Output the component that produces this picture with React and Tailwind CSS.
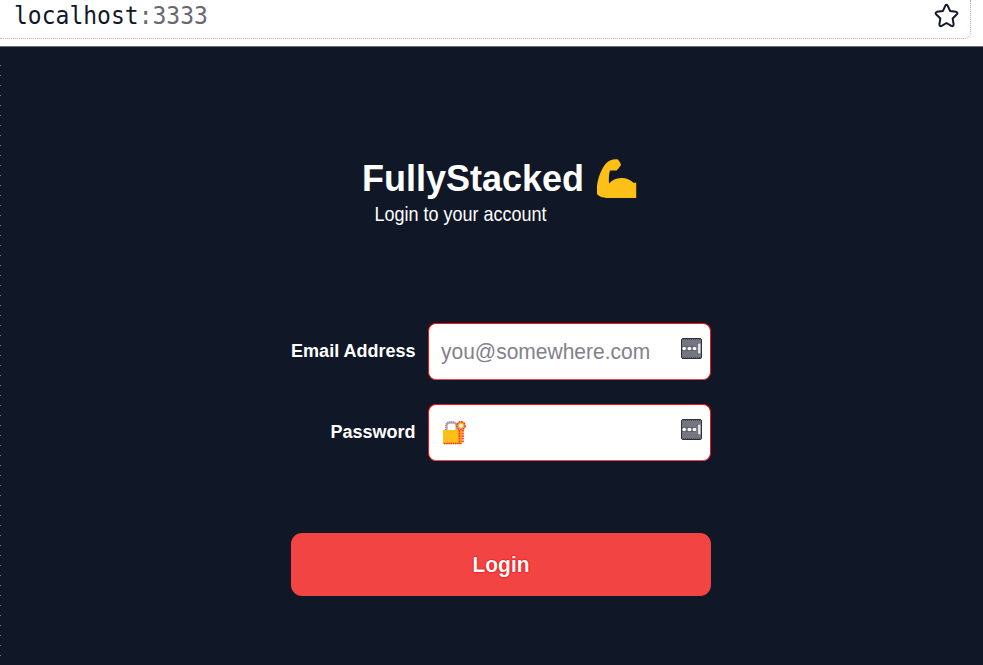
import React from "react";

const sans = "font-['Liberation_Sans',Arial,sans-serif]";

function Star() {
  return (
    <svg className="h-[25px] w-[25px]" viewBox="0 0 26 26" fill="none" stroke="#111827" strokeWidth="2.1" strokeLinejoin="round">
      <path d="M11.8 2.8Q13 .8 14.2 2.8L16.7 8.2L23 9.2Q25.2 10 23.8 11.7L19.4 16.2L20.4 22Q20.3 24.8 18 23.8L13 20.8L8 23.8Q5.7 24.8 5.6 22L6.6 16.2L2.2 11.7Q.8 10 3 9.2L9.3 8.2Z" />
    </svg>
  );
}

function FlexedArm() {
  return (
    <svg className="h-10 w-10" viewBox="0 0 40 40" fill="#fdc016">
      <path d="M0 37V27C1 18 5 8 10.5 3C13 .8 17 -.3 21 .4C22 1.8 23.7 4 24 6L21.5 9.5L19.5 11.5L13 11.6C11.8 15 11.7 20 12 24.5C15 21 19 19.4 24 19C29 18.8 33 20.5 36.5 23.7H39.2V39H11C7 39 3 38.4 0 35Z" />
    </svg>
  );
}

function LockWithKey() {
  return (
    <svg className="h-6 w-6" viewBox="0 0 24 24">
      <path d="M3.6 9V4.5Q3.6 1.8 6.5 1.6H11Q13.5 2 13.5 5V9" fill="none" stroke="#b9a5ad" strokeWidth="2.2" />
      <path d="M2.6 9V4Q3.5 .9 6.5 .8H11.5" fill="none" stroke="#777785" strokeWidth=".8" strokeDasharray="1 1" />
      <rect x="0" y="9" width="19" height="14" fill="#fdc016" />
      <path d="M1 22.5H19" stroke="#ff1818" strokeWidth="1.3" strokeDasharray="1.4 .8" />
      <circle cx="18" cy="4.7" r="3" fill="none" stroke="#fdb116" strokeWidth="2" />
      <circle cx="18" cy="4.7" r="4.1" fill="none" stroke="#ff2525" strokeWidth="1.3" strokeDasharray="2 .7" />
      <path d="M18 9V21" stroke="#fd9d16" strokeWidth="3" />
      <path d="M16.3 9V22M20 9V22" stroke="#ff2525" strokeWidth="1.5" strokeDasharray="1.8 .8" />
    </svg>
  );
}

function AutofillIcon() {
  return (
    <svg className="h-[21px] w-[21px] shrink-0" viewBox="0 0 21 21">
      <rect x=".5" y=".5" width="20" height="20" rx="1.5" fill="#747680" stroke="#2c303c" />
      <path d="M2 1.5H19M2 19.5H19" stroke="#4b4f5b" strokeDasharray="1 1" />
      <path d="M1.5 8.5H15.5M1.5 12.5H15.5" stroke="#454955" strokeDasharray="1 1" />
      <circle cx="3.2" cy="10.5" r="1.8" fill="#fff" />
      <circle cx="8.4" cy="10.5" r="1.8" fill="#fff" />
      <circle cx="13.5" cy="10.5" r="1.8" fill="#fff" />
      <path d="M16.5 5.5H18.8V15.5H16.5" fill="none" stroke="#3a3e4a" strokeWidth=".8" />
      <path d="M18.3 5.5V15.5" stroke="#efe3ea" strokeWidth="2.4" />
    </svg>
  );
}

function Field({ label, children }) {
  return (
    <div className="flex h-[57px] items-center justify-between">
      <label className="w-[124.5px] origin-center scale-y-[1.05] whitespace-nowrap pb-[2px] text-right text-[18px] font-bold leading-6 text-white">
        {label}
      </label>
      <div className="flex h-[57px] w-[283px] items-center justify-between rounded-[8px] border border-[#ff1010] border-b-[#e84b4f] bg-white pl-3 pr-2">
        {children}
        <div className="pb-[6px]">
          <AutofillIcon />
        </div>
      </div>
    </div>
  );
}

export default function App() {
  return (
    <div className={`flex h-[665px] w-[983px] flex-col overflow-hidden bg-[#101726] ${sans}`}>
      <header className="h-[47px] shrink-0 border-b border-[#6b6e79] bg-white">
        <div className="flex h-[39px] w-[971px] items-start justify-between rounded-br-[6px] border-b border-r border-dotted border-[#cf9fae] pl-[14px] pr-[11px]">
          <div className="origin-center scale-y-[1.06] whitespace-pre pt-px font-['DejaVu_Sans_Mono',monospace] text-[23px] leading-[31px] text-[#111827]">
            localhost<span className="text-[#6b6670]">:3333</span>
          </div>
          <div className="pt-[3px]">
            <Star />
          </div>
        </div>
      </header>
      <main className="flex min-h-0 grow">
        <div className="mt-[18px] w-px shrink-0 bg-[repeating-linear-gradient(to_bottom,#777b86_0px,#777b86_1px,transparent_1px,transparent_10px)]" />
        <div className="ml-[290px] w-[420px] pt-[112px]">
          <div className="flex h-10 pl-[71px]">
            <h1 className="w-[235px] origin-center scale-y-[1.04] whitespace-nowrap text-[36px] font-bold leading-10 text-white">FullyStacked</h1>
            <FlexedArm />
          </div>
          <p className="mt-[3px] origin-center scale-y-[1.1] pl-[83.5px] text-[18px] leading-6 text-white">Login to your account</p>
          <form className="mt-[97px] flex flex-col gap-6">
            <Field label="Email Address">
              <span className="origin-center scale-y-[1.05] text-[21px] leading-6 text-[#85808a]">you@somewhere.com</span>
            </Field>
            <Field label="Password">
              <span className="pl-[2px]"><LockWithKey /></span>
            </Field>
            <button type="button" className="mt-12 h-[63px] w-full rounded-[11px] bg-[#f34444] text-[21px] font-bold text-white [text-shadow:0_0_1px_#f00000,0_0_1px_#f00000,0_0_2px_#f00000]">
              <span className="inline-block scale-y-[1.06] pt-px">Login</span>
            </button>
          </form>
        </div>
      </main>
    </div>
  );
}
